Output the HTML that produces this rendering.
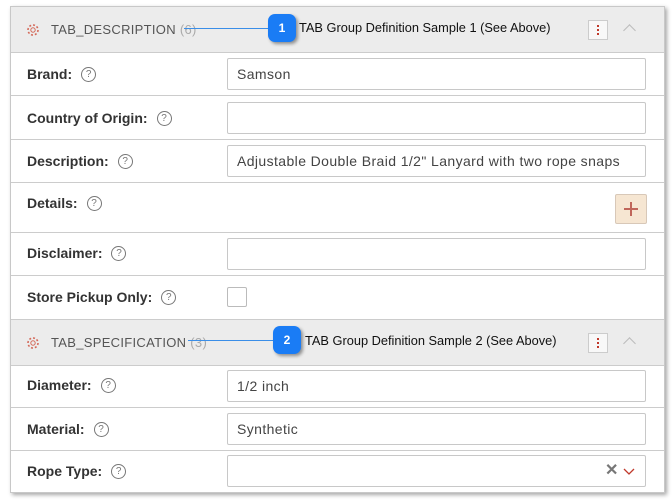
<!DOCTYPE html><html><head><style>
body{margin:0;width:672px;height:502px;background:#fff;font-family:"Liberation Sans",sans-serif;position:relative;overflow:hidden}
.panel{position:absolute;left:10px;top:6px;width:653px;height:485px;border:1px solid #c8c8c8;box-shadow:2px 2px 4px rgba(0,0,0,.35);background:#fff}
.hdr{position:absolute;left:0;width:653px;height:45px;background:#ececec;border-bottom:1px solid #ccc}
.hdr .t{position:absolute;left:40px;top:15px;font-size:13px;color:#555;letter-spacing:.3px}
.hdr .t span{color:#aaa}
.gear{position:absolute;left:15px;top:16px}
.menu{position:absolute;left:577px;top:13px;width:18px;height:18px;border:1px solid #ccc;background:#f8f8f8}
.menu i{position:absolute;left:8px;width:2px;height:2px;background:#c0392b}
.chev{position:absolute;left:614px;top:19px;width:8px;height:8px;border-left:1px solid #bbb;border-top:1px solid #bbb;transform:rotate(45deg)}
.row{position:absolute;left:0;width:653px;border-bottom:1px solid #ccc}
.lab{position:absolute;left:16px;font-size:14px;font-weight:bold;color:#333;display:flex;align-items:center;height:18px}
.q{display:inline-block;width:13px;height:13px;border:1.3px solid #777;border-radius:50%;font-size:10px;font-weight:normal;text-align:center;line-height:13px;color:#777;margin-left:9px}
.in{position:absolute;left:216px;border:1px solid #c8c8c8;border-radius:2px;font-size:14px;letter-spacing:.4px;color:#444;line-height:30px;padding-left:9px;box-sizing:border-box;width:419px;height:32px;white-space:nowrap}
.callout{position:absolute;width:28px;height:28px;border-radius:7px;background:#1a7cf5;color:#fff;font-size:12px;font-weight:bold;text-align:center;line-height:28px;box-shadow:2px 2px 3px rgba(0,0,0,.4)}
.ct{position:absolute;font-size:12.8px;color:#111}
.line{position:absolute;height:1px;background:#3a8ee8}
</style></head><body>
<div class="panel">
 <div class="hdr" style="top:0"><svg class="gear" width="14" height="14" viewBox="0 0 14 14"><circle cx="7" cy="7" r="2.2" fill="none" stroke="#d46a5a" stroke-width="1"/><circle cx="7" cy="7" r="5" fill="none" stroke="#d46a5a" stroke-width="1.6" stroke-dasharray="2 1.9"/></svg><div class="t">TAB_DESCRIPTION <span>(6)</span></div><div class="menu"><i style="top:4px"></i><i style="top:8px"></i><i style="top:12px"></i></div><div class="chev"></div></div>
 <div class="row" style="top:46px;height:42px"><div class="lab" style="top:12px">Brand:<span class="q">?</span></div><div class="in" style="top:5px">Samson</div></div>
 <div class="row" style="top:89px;height:43px"><div class="lab" style="top:13px">Country of Origin:<span class="q">?</span></div><div class="in" style="top:6px"></div></div>
 <div class="row" style="top:133px;height:42px"><div class="lab" style="top:12px">Description:<span class="q">?</span></div><div class="in" style="top:5px">Adjustable Double Braid 1/2" Lanyard with two rope snaps</div></div>
 <div class="row" style="top:176px;height:49px"><div class="lab" style="top:11px">Details:<span class="q">?</span></div><div style="position:absolute;left:604px;top:11px;width:30px;height:28px;background:#f6e6d2;border:1px solid #d8c8b8;border-radius:2px"><div style="position:absolute;left:8px;top:13px;width:14px;height:1.5px;background:#c0665a"></div><div style="position:absolute;left:14px;top:7px;width:1.5px;height:14px;background:#c0665a"></div></div></div>
 <div class="row" style="top:226px;height:42px"><div class="lab" style="top:11px">Disclaimer:<span class="q">?</span></div><div class="in" style="top:5px"></div></div>
 <div class="row" style="top:269px;height:42px;border-bottom:none"><div class="lab" style="top:12px">Store Pickup Only:<span class="q">?</span></div><div style="position:absolute;left:216px;top:11px;width:18px;height:18px;border:1px solid #bbb;border-radius:2px"></div></div>
 <div class="hdr" style="top:312px;border-top:1px solid #ccc"><svg class="gear" width="14" height="14" viewBox="0 0 14 14"><circle cx="7" cy="7" r="2.2" fill="none" stroke="#d46a5a" stroke-width="1"/><circle cx="7" cy="7" r="5" fill="none" stroke="#d46a5a" stroke-width="1.6" stroke-dasharray="2 1.9"/></svg><div class="t">TAB_SPECIFICATION <span>(3)</span></div><div class="menu"><i style="top:4px"></i><i style="top:8px"></i><i style="top:12px"></i></div><div class="chev"></div></div>
 <div class="row" style="top:358px;height:42px"><div class="lab" style="top:11px">Diameter:<span class="q">?</span></div><div class="in" style="top:5px">1/2 inch</div></div>
 <div class="row" style="top:401px;height:42px"><div class="lab" style="top:12px">Material:<span class="q">?</span></div><div class="in" style="top:5px">Synthetic</div></div>
 <div class="row" style="top:444px;height:40px;border-bottom:none"><div class="lab" style="top:11px">Rope Type:<span class="q">?</span></div><div class="in" style="top:4px"><span style="position:absolute;left:377px;top:0;color:#777;font-size:16px;font-weight:bold">✕</span><svg style="position:absolute;left:395px;top:12px" width="12" height="8"><path d="M1 1L6 6L11 1" fill="none" stroke="#c0392b" stroke-width="1.3"/></svg></div></div>
</div>
<div class="line" style="left:184px;top:28px;width:88px"></div>
<div class="callout" style="left:268px;top:14px">1</div>
<div class="ct" style="left:299px;top:20px">TAB Group Definition Sample 1 (See Above)</div>
<div class="line" style="left:188px;top:340px;width:88px"></div>
<div class="callout" style="left:273px;top:326px">2</div>
<div class="ct" style="left:305px;top:333px">TAB Group Definition Sample 2 (See Above)</div>
</body></html>
